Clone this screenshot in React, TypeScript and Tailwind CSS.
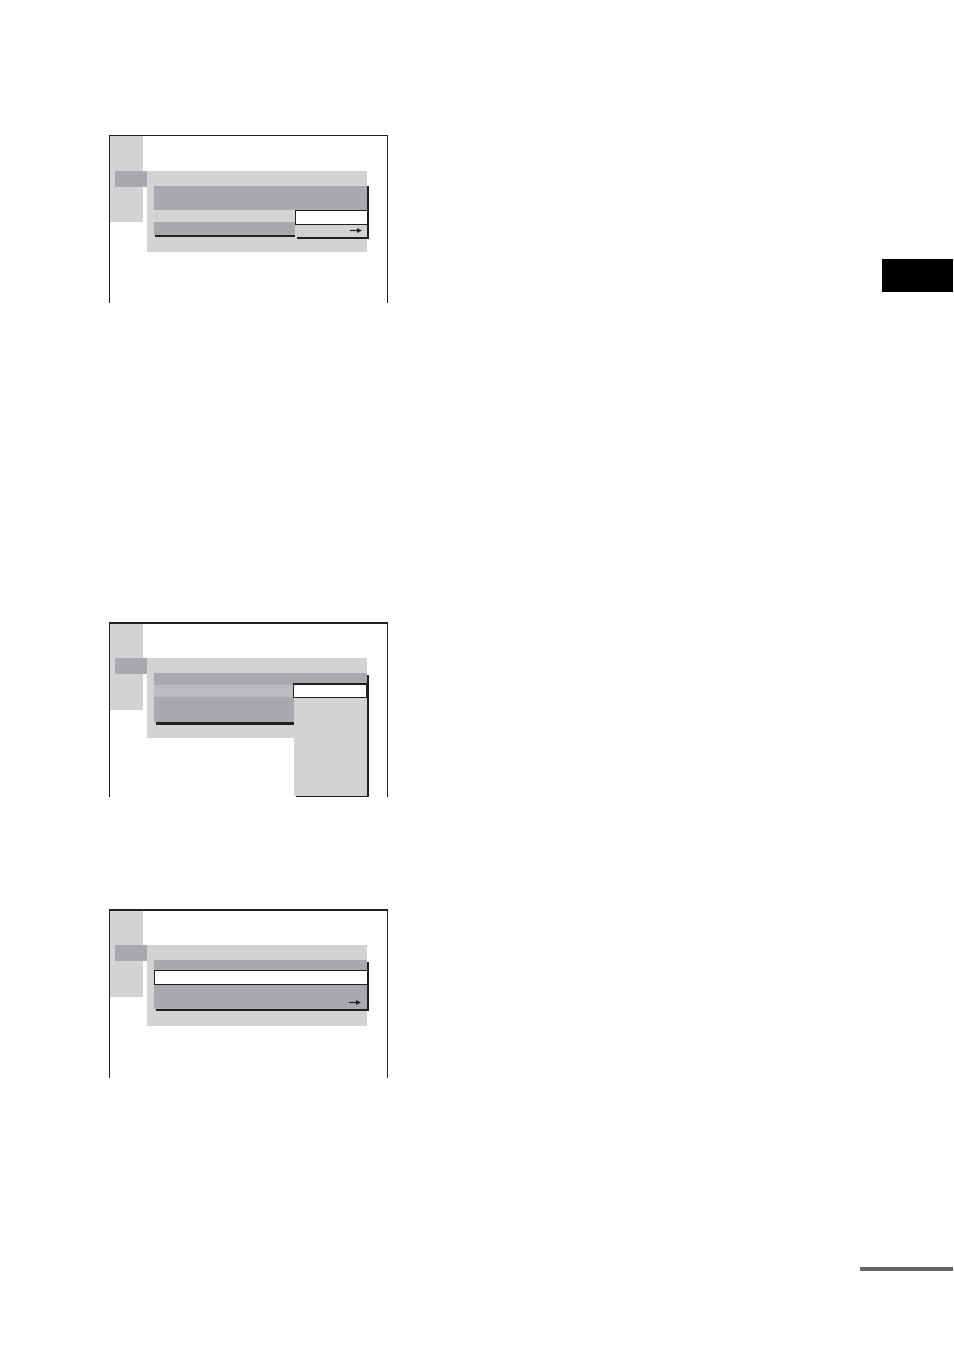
import type { ReactNode } from "react";
import clsx from "clsx";

const Arrow = ({ className }: { className?: string }) => (
  <svg className={clsx("block", className)} width="12" height="6" viewBox="0 0 12 6" aria-hidden="true">
    <path d="M0 2.5H8" stroke="#231f20" strokeWidth="1.2" />
    <path d="M7 0L12 2.5L7 5Z" fill="#231f20" />
  </svg>
);

type ScreenProps = {
  className: string;
  offset: string;
  panel: string;
  children: ReactNode;
};

// A menu display: side strip, selected tab and the panel it opens
const Screen = ({ className, offset, panel, children }: ScreenProps) => (
  <section className={clsx("flex w-[279px] items-start border-x border-[#231f20]", className)}>
    <div className={clsx("h-[86px] w-[33px] shrink-0 bg-[#d2d3d5]", offset)}>
      <div className="relative ml-[5px] h-4 w-8 bg-[#a8a9ad]" />
    </div>
    <div className={clsx("mr-5 ml-1 flex-1 bg-[#d2d3d5] pt-[15px] pl-[7px]", panel)}>{children}</div>
  </section>
);

const App = () => {
  return (
    <main className="flex min-h-screen justify-between bg-white">
      <div className="flex flex-col pt-[135px] pl-[109px]">
        <Screen className="h-[168px] border-t" offset="pt-[35px]" panel="mt-[35px] h-[81px]">
          <div className="relative shadow-[2px_0_0_#231f20,1px_2px_0_#231f20]">
            <div className="h-6 bg-[#a8a9ad]" />
            <div className="h-3 bg-[#d2d3d5]" />
            <div className="h-[13px] bg-[#a8a9ad]" />
            <div className="absolute top-6 right-0 w-[72px] bg-[#d2d3d5] shadow-[2px_2px_0_#231f20]">
              <div className="h-[15px] border-y border-l border-[#231f20] bg-white" />
              <div className="flex h-3 items-center justify-end pr-[5px]">
                <Arrow />
              </div>
            </div>
          </div>
        </Screen>

        <Screen className="mt-[319px] h-[175px] border-t-2" offset="pt-[34px]" panel="mt-[34px] h-20">
          <div className="relative shadow-[2px_2px_0_#231f20,2px_3px_0_#231f20]">
            <div className="h-3 bg-[#a8a9ad]" />
            <div className="h-3 bg-[#bcbdc1]" />
            <div className="h-[25px] bg-[#a8a9ad]" />
            <div className="absolute top-[10px] right-0 w-[73px] bg-[#d2d3d5] shadow-[2px_1px_0_#231f20]">
              <div className="-ml-px h-[15px] border border-t-2 border-[#231f20] bg-white" />
              <div className="h-[98px]" />
            </div>
          </div>
        </Screen>

        <Screen className="mt-[112px] h-[169px] border-t-2" offset="pt-[34px]" panel="mt-[34px] h-[81px]">
          <div className="shadow-[2px_2px_0_#231f20]">
            <div className="h-[10px] bg-[#a8a9ad]" />
            <div className="h-[15px] border-y border-l border-[#231f20] bg-white" />
            <div className="flex h-6 items-end justify-end bg-[#a8a9ad] pr-[6px] pb-[3px]">
              <Arrow />
            </div>
          </div>
        </Screen>
      </div>

      <aside className="flex flex-col items-end justify-between pt-[259px] pr-px pb-20">
        <div className="h-[33px] w-[71px] bg-black" />
        <div className="h-1 w-[93px] bg-[#646464]" />
      </aside>
    </main>
  );
};
export default App;
